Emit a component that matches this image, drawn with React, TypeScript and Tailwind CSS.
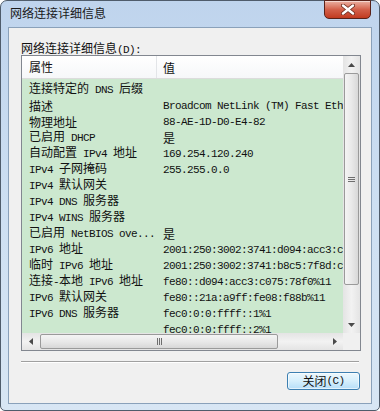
import React from 'react';

// Win7 "网络连接详细信息" dialog
const CJK = /[\u2E80-\u9FFF\uFF00-\uFFEF]/;

function T({ s }: { s: string }) {
  const parts = s.split(/([\u2E80-\u9FFF\uFF00-\uFFEF]+)/).filter(Boolean);
  return (
    <>
      {parts.map((p, i) =>
        CJK.test(p) ? (
          <span key={i} className="text-[12px] font-['Noto_Sans_CJK_SC',sans-serif]">
            {p}
          </span>
        ) : (
          <span key={i} className="text-[11px] tracking-[-0.6px] font-['Liberation_Mono',monospace] whitespace-pre">
            {p}
          </span>
        )
      )}
    </>
  );
}

const rows: [string, string][] = [
  ['连接特定的 DNS 后缀', ''],
  ['描述', 'Broadcom NetLink (TM) Fast Ethernet'],
  ['物理地址', '88-AE-1D-D0-E4-82'],
  ['已启用 DHCP', '是'],
  ['自动配置 IPv4 地址', '169.254.120.240'],
  ['IPv4 子网掩码', '255.255.0.0'],
  ['IPv4 默认网关', ''],
  ['IPv4 DNS 服务器', ''],
  ['IPv4 WINS 服务器', ''],
  ['已启用 NetBIOS ove...', '是'],
  ['IPv6 地址', '2001:250:3002:3741:d094:acc3:c075:78f0'],
  ['临时 IPv6 地址', '2001:250:3002:3741:b8c5:7f8d:c2a1:1e4b'],
  ['连接-本地 IPv6 地址', 'fe80::d094:acc3:c075:78f0%11'],
  ['IPv6 默认网关', 'fe80::21a:a9ff:fe08:f88b%11'],
  ['IPv6 DNS 服务器', 'fec0:0:0:ffff::1%1'],
  ['', 'fec0:0:0:ffff::2%1'],
];

function Arrow({ dir }: { dir: 'up' | 'down' | 'left' | 'right' }) {
  const pts = {
    up: '0,4 3.5,0 7,4',
    down: '0,0 3.5,4 7,0',
    left: '4,0 0,3.5 4,7',
    right: '0,0 4,3.5 0,7',
  }[dir];
  const vert = dir === 'up' || dir === 'down';
  return (
    <svg width={vert ? 7 : 4} height={vert ? 4 : 7} viewBox={vert ? '0 0 7 4' : '0 0 4 7'}>
      <polygon points={pts} fill="#4a4a4a" />
    </svg>
  );
}

export default function App() {
  return (
    <div className="w-[380px] h-[411px] bg-white">
      <div className="relative w-[380px] h-[411px] flex flex-col rounded-t-[7px] rounded-b-[5px] border border-[#4f5c6b] bg-gradient-to-b from-[#bfd4ed] via-[#cddff2] to-[#d8e6f4] px-[7px] pb-[6px]">
        {/* Title bar */}
        <div className="h-[26px] flex items-center pl-[2px] pb-[3px] text-[#1a1a1a]">
          <T s="网络连接详细信息" />
        </div>

        {/* Close button */}
        <div className="absolute top-[-1px] right-[8px] w-[47px] h-[19px] rounded-b-[5px] border border-[#5a2219] bg-gradient-to-b from-[#eab0a2] via-[#d3604a] to-[#c13a1f] flex items-center justify-center shadow-[inset_0_1px_0_rgba(255,255,255,0.5)]">
          <svg width="14" height="11" viewBox="0 0 14 11">
            <path d="M2 1.5 L12 9.5 M12 1.5 L2 9.5" stroke="#6b2a1c" strokeWidth="4" strokeLinecap="round" />
            <path d="M2 1.5 L12 9.5 M12 1.5 L2 9.5" stroke="#ffffff" strokeWidth="2.4" strokeLinecap="round" />
          </svg>
        </div>

        {/* Client area */}
        <div className="flex-1 border border-[#8aa1ba] bg-[#f0f0f0] flex flex-col pl-[12px] pr-[9px]">
          <div className="mt-[11px] h-[16px] leading-[16px] text-[#111]">
            <T s="网络连接详细信息(D):" />
          </div>

          {/* List view */}
          <div className="w-[340px] h-[296px] border border-[#828790] bg-white flex flex-col">
            <div className="flex flex-1 min-h-0">
              <div className="flex-1 min-w-0 flex flex-col overflow-hidden">
                <div className="h-[23px] shrink-0 flex items-center border-b border-[#dcdcdc] bg-gradient-to-b from-white to-[#f6f7f9] text-[#111]">
                  <div className="w-[135px] h-full flex items-center pl-[7px] border-r border-[#e3e5e8]">
                    <T s="属性" />
                  </div>
                  <div className="pl-[6px]">
                    <T s="值" />
                  </div>
                </div>
                <div className="flex-1 bg-[#cce8cf] pt-[2px] overflow-hidden text-[#111]">
                  {rows.map(([k, v], i) => (
                    <div key={i} className="h-[16px] leading-[15px] flex items-center whitespace-nowrap">
                      <div className="w-[141px] shrink-0 pl-[7px] overflow-hidden">
                        <T s={k} />
                      </div>
                      <div className="shrink-0">
                        <T s={v} />
                      </div>
                    </div>
                  ))}
                </div>
              </div>

              {/* Vertical scrollbar */}
              <div className="w-[17px] shrink-0 flex flex-col bg-gradient-to-r from-[#e4e4e4] via-[#f2f2f2] to-[#e4e4e4]">
                <div className="h-[17px] flex items-center justify-center">
                  <Arrow dir="up" />
                </div>
                <div className="h-[212px] mx-[1px] rounded-[2px] border border-[#9a9a9a] bg-gradient-to-r from-[#f4f4f4] via-[#e9e9e9] to-[#d8d8d8] flex items-center justify-center">
                  <div className="flex flex-col gap-[1px]">
                    <div className="w-[7px] h-[1px] bg-[#6e6e6e]" />
                    <div className="w-[7px] h-[1px] bg-[#6e6e6e]" />
                    <div className="w-[7px] h-[1px] bg-[#6e6e6e]" />
                  </div>
                </div>
                <div className="flex-1" />
                <div className="h-[17px] flex items-center justify-center">
                  <Arrow dir="down" />
                </div>
              </div>
            </div>

            {/* Horizontal scrollbar */}
            <div className="h-[17px] shrink-0 flex">
              <div className="flex-1 flex items-stretch bg-gradient-to-b from-[#e4e4e4] via-[#f2f2f2] to-[#e4e4e4]">
                <div className="w-[17px] flex items-center justify-center">
                  <Arrow dir="left" />
                </div>
                <div className="w-[238px] my-[1px] ml-[1px] rounded-[2px] border border-[#9a9a9a] bg-gradient-to-b from-[#f4f4f4] via-[#e9e9e9] to-[#d8d8d8] flex items-center justify-center">
                  <div className="flex gap-[1px]">
                    <div className="w-[1px] h-[7px] bg-[#6e6e6e]" />
                    <div className="w-[1px] h-[7px] bg-[#6e6e6e]" />
                    <div className="w-[1px] h-[7px] bg-[#6e6e6e]" />
                  </div>
                </div>
                <div className="flex-1" />
                <div className="w-[17px] flex items-center justify-center">
                  <Arrow dir="right" />
                </div>
              </div>
              <div className="w-[17px] bg-[#f0f0f0]" />
            </div>
          </div>

          {/* Separator */}
          <div className="mt-[10px] w-[338px] h-[1px] bg-[#a0a0a0]" />
          <div className="w-[338px] h-[1px] bg-white" />

          {/* Button */}
          <div className="mt-[9px] flex justify-end pr-[2px]">
            <div className="w-[73px] h-[18px] rounded-[3px] border border-[#3c7fb1] bg-gradient-to-b from-[#ecf7fd] via-[#d6effc] to-[#b6def8] flex items-center justify-center leading-none text-[#111] shadow-[inset_0_0_0_1px_rgba(255,255,255,0.6)]">
              <T s="关闭(C)" />
            </div>
          </div>
        </div>
      </div>
    </div>
  );
}
